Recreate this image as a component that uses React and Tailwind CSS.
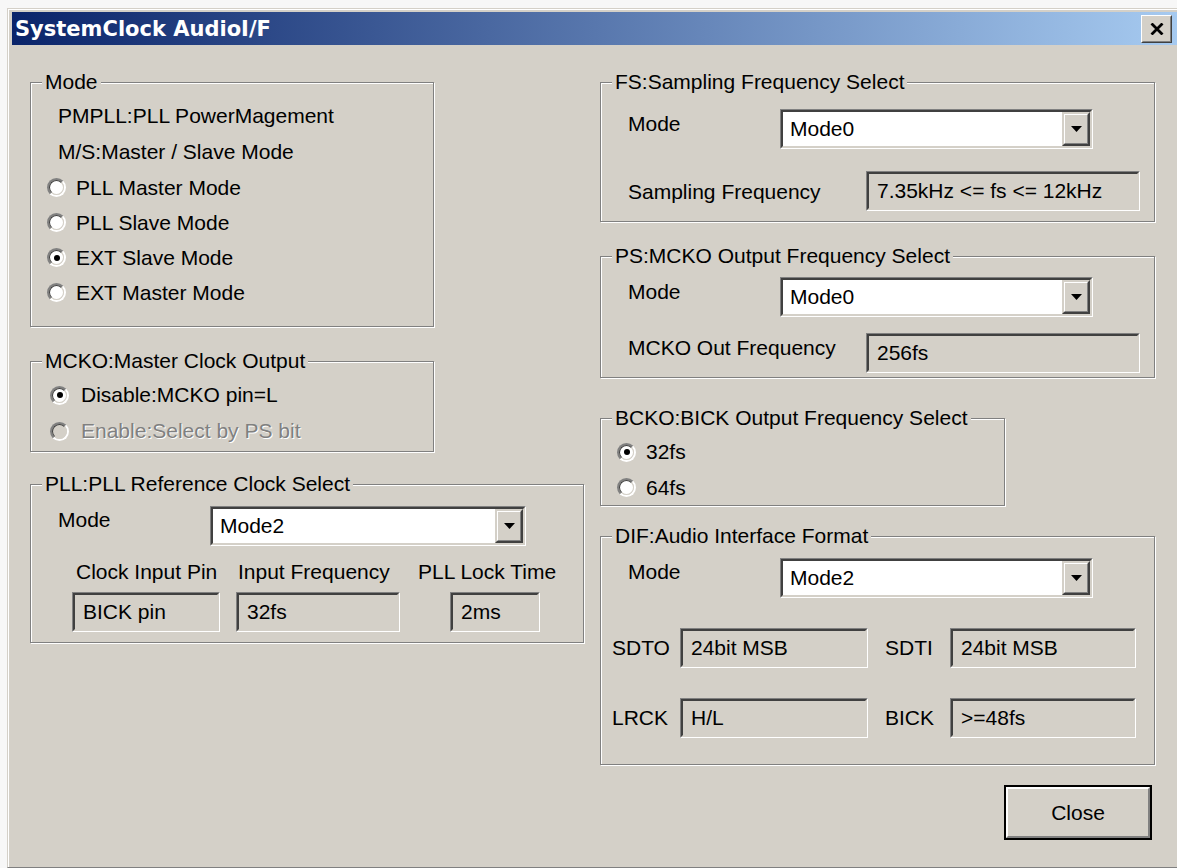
import React from "react";

// Etched group box with a caption sitting on its top edge
function Group({ title, className = "", children }) {
  return (
    <div
      className={`relative border border-[#808080] shadow-[inset_1px_1px_0_#ffffff,1px_1px_0_#ffffff] ${className}`}
    >
      <span className="absolute left-[11px] -top-[13px] bg-[#d4d0c8] px-[3px] leading-[24px] whitespace-nowrap">
        {title}
      </span>
      {children}
    </div>
  );
}

function Radio({ checked = false, disabled = false }) {
  return (
    <span className="inline-flex w-[19px] h-[19px] shrink-0 rounded-full border-2 border-t-[#808080] border-l-[#808080] border-r-white border-b-white">
      <span
        className={`flex flex-1 items-center justify-center rounded-full border border-t-[#404040] border-l-[#404040] border-r-[#d4d0c8] border-b-[#d4d0c8] ${
          disabled ? "bg-[#d4d0c8]" : "bg-white"
        }`}
      >
        {checked && <span className="w-[6px] h-[6px] rounded-full bg-black" />}
      </span>
    </span>
  );
}

function RadioRow({ label, checked, disabled, className = "" }) {
  return (
    <div className={`flex items-center gap-[10px] ${className}`}>
      <Radio checked={checked} disabled={disabled} />
      <span
        className={
          disabled
            ? "text-[#808080] [text-shadow:1px_1px_0_#ffffff]"
            : "text-black"
        }
      >
        {label}
      </span>
    </div>
  );
}

// Sunken two-level edge used by combo boxes and read-only fields
function Sunken({ className = "", inner = "", children }) {
  return (
    <div
      className={`flex h-[40px] border border-t-[#808080] border-l-[#808080] border-r-white border-b-white ${className}`}
    >
      <div
        className={`flex flex-1 min-w-0 border-2 border-t-[#404040] border-l-[#404040] border-r-[#d4d0c8] border-b-[#d4d0c8] ${inner}`}
      >
        {children}
      </div>
    </div>
  );
}

function Combo({ value, className = "" }) {
  return (
    <Sunken className={className} inner="bg-white">
      <span className="flex flex-1 items-center pl-[7px] leading-[24px]">
        {value}
      </span>
      <span className="flex w-[28px] border-2 border-t-[#d4d0c8] border-l-[#d4d0c8] border-r-[#404040] border-b-[#404040]">
        <span className="flex flex-1 items-center justify-center bg-[#d4d0c8] border border-t-white border-l-white border-r-[#808080] border-b-[#808080]">
          <svg width="11" height="6" viewBox="0 0 11 6">
            <polygon points="0,0 11,0 5.5,6" fill="#000000" />
          </svg>
        </span>
      </span>
    </Sunken>
  );
}

function Field({ value, className = "" }) {
  return (
    <Sunken className={className} inner="bg-[#d4d0c8]">
      <span className="flex flex-1 items-center pl-[8px] leading-[24px] whitespace-nowrap">
        {value}
      </span>
    </Sunken>
  );
}

export default function App() {
  return (
    <div className="w-[1177px] h-[868px] overflow-hidden bg-[#f7f7f7] pl-[7px] pt-[8px] [font-family:'Liberation_Sans',Arial,sans-serif] text-[21px] leading-[24px] text-black">
      {/* dialog window */}
      <div className="flex flex-col w-[1173px] h-[860px] border-t border-l border-b border-t-[#d4d0c8] border-l-[#d4d0c8] border-b-[#808080] bg-[#d4d0c8] shadow-[inset_1px_1px_0_#ffffff] pt-[3px] pl-[4px] pr-[3px]">
        {/* title bar */}
        <div className="flex items-center justify-between h-[33px] shrink-0 bg-[linear-gradient(to_right,#0a246a,#a6caf0)]">
          <span className="pl-[3px] [font-family:'DejaVu_Sans',Verdana,sans-serif] font-bold text-[21px] leading-[24px] text-white whitespace-nowrap">
            SystemClock AudioI/F
          </span>
          <button className="flex mr-[5px] w-[31px] h-[28px] border border-t-white border-l-white border-r-[#404040] border-b-[#404040] bg-[#d4d0c8]">
            <span className="flex flex-1 items-center justify-center border border-t-[#d4d0c8] border-l-[#d4d0c8] border-r-[#808080] border-b-[#808080]">
              <svg width="14" height="12" viewBox="0 0 14 12">
                <path
                  d="M1.5 0.5 L12.5 11.5 M12.5 0.5 L1.5 11.5"
                  stroke="#000000"
                  strokeWidth="2.8"
                  strokeLinecap="butt"
                  fill="none"
                />
              </svg>
            </span>
          </button>
        </div>

        {/* dialog body */}
        <div className="flex flex-1 pl-[18px] pt-[37px]">
          {/* left column */}
          <div className="flex flex-col w-[554px] items-start">
            <Group title="Mode" className="w-[404px] pt-[15px] pb-[16px]">
              <div className="flex items-center h-[36px] pl-[27px]">
                PMPLL:PLL PowerMagement
              </div>
              <div className="flex items-center h-[36px] pl-[27px]">
                M/S:Master / Slave Mode
              </div>
              <RadioRow label="PLL Master Mode" className="h-[35px] pl-[16px]" />
              <RadioRow label="PLL Slave Mode" className="h-[35px] pl-[16px]" />
              <RadioRow
                label="EXT Slave Mode"
                checked
                className="h-[35px] pl-[16px]"
              />
              <RadioRow label="EXT Master Mode" className="h-[35px] pl-[16px]" />
            </Group>

            <Group
              title="MCKO:Master Clock Output"
              className="w-[404px] mt-[34px] pt-[15px] pb-[2px]"
            >
              <RadioRow
                label="Disable:MCKO pin=L"
                checked
                className="h-[36px] pl-[19px] gap-[12px]"
              />
              <RadioRow
                label="Enable:Select by PS bit"
                disabled
                className="h-[36px] pl-[19px] gap-[12px]"
              />
            </Group>

            <Group
              title="PLL:PLL Reference Clock Select"
              className="w-[554px] mt-[32px] pt-[21px] pb-[10px]"
            >
              <div className="flex items-start">
                <span className="w-[179px] pl-[27px] mt-[2px]">Mode</span>
                <Combo value="Mode2" className="w-[316px]" />
              </div>
              <div className="flex items-start mt-[14px] pl-[41px]">
                <div className="flex flex-col w-[148px]">
                  <span className="pl-[4px] whitespace-nowrap">Clock Input Pin</span>
                  <Field value="BICK pin" className="mt-[8px]" />
                </div>
                <div className="flex flex-col w-[164px] ml-[16px]">
                  <span className="pl-[2px] whitespace-nowrap">Input Frequency</span>
                  <Field value="32fs" className="mt-[8px]" />
                </div>
                <div className="flex flex-col w-[140px] ml-[18px]">
                  <span className="whitespace-nowrap">PLL Lock Time</span>
                  <Field value="2ms" className="mt-[8px] ml-[32px] w-[90px]" />
                </div>
              </div>
            </Group>
          </div>

          {/* right column */}
          <div className="flex flex-col w-[555px] ml-[16px] items-start">
            <Group
              title="FS:Sampling Frequency Select"
              className="w-[555px] pt-[26px] pb-[10px]"
            >
              <div className="flex items-start">
                <span className="w-[179px] pl-[27px] mt-[3px]">Mode</span>
                <Combo value="Mode0" className="w-[313px]" />
              </div>
              <div className="flex items-start mt-[22px]">
                <span className="w-[265px] pl-[27px] mt-[9px] whitespace-nowrap">
                  Sampling Frequency
                </span>
                <Field value="7.35kHz <= fs <= 12kHz" className="w-[274px]" />
              </div>
            </Group>

            <Group
              title="PS:MCKO Output Frequency Select"
              className="w-[555px] mt-[34px] pt-[20px] pb-[4px]"
            >
              <div className="flex items-start">
                <span className="w-[179px] pl-[27px] mt-[3px]">Mode</span>
                <Combo value="Mode0" className="w-[313px]" />
              </div>
              <div className="flex items-start mt-[16px]">
                <span className="w-[265px] pl-[27px] mt-[3px] whitespace-nowrap">
                  MCKO Out Frequency
                </span>
                <Field value="256fs" className="w-[274px]" />
              </div>
            </Group>

            <Group
              title="BCKO:BICK Output Frequency Select"
              className="w-[405px] mt-[40px] pt-[15px]"
            >
              <RadioRow label="32fs" checked className="h-[36px] pl-[16px]" />
              <RadioRow label="64fs" className="h-[35px] pl-[16px]" />
            </Group>

            <Group
              title="DIF:Audio Interface Format"
              className="w-[555px] mt-[30px] pt-[21px] pb-[26px]"
            >
              <div className="flex items-start">
                <span className="w-[179px] pl-[27px] mt-[2px]">Mode</span>
                <Combo value="Mode2" className="w-[313px]" />
              </div>
              <div className="flex items-center mt-[30px]">
                <span className="w-[79px] pl-[11px]">SDTO</span>
                <Field value="24bit MSB" className="w-[188px]" />
                <span className="w-[65px] ml-[17px]">SDTI</span>
                <Field value="24bit MSB" className="w-[186px]" />
              </div>
              <div className="flex items-center mt-[30px]">
                <span className="w-[79px] pl-[11px]">LRCK</span>
                <Field value="H/L" className="w-[188px]" />
                <span className="w-[65px] ml-[17px]">BICK</span>
                <Field value=">=48fs" className="w-[186px]" />
              </div>
            </Group>

            <button className="flex self-end mt-[20px] mr-[3px] w-[148px] h-[55px] border-2 border-black bg-[#d4d0c8]">
              <span className="flex flex-1 items-center justify-center border-2 border-t-white border-l-white border-r-[#808080] border-b-[#808080] leading-[24px]">
                Close
              </span>
            </button>
          </div>
        </div>
      </div>
    </div>
  );
}
